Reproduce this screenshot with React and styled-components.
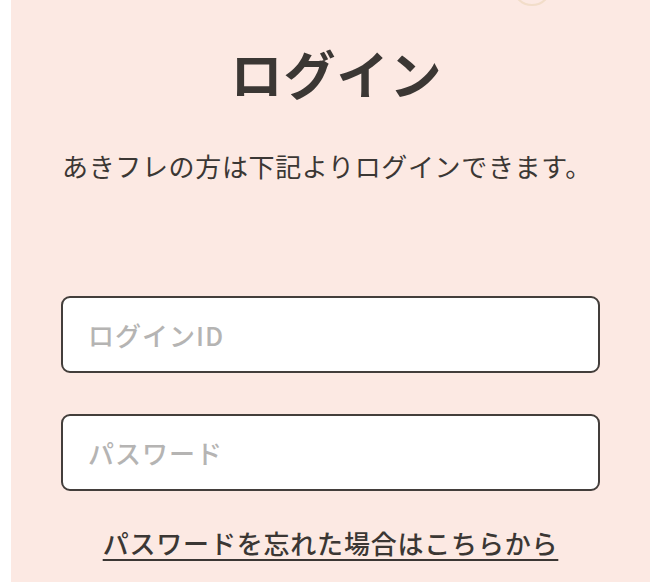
import React from "react";
import styled, { createGlobalStyle } from "styled-components";

const Global = createGlobalStyle`
  html, body { margin: 0; padding: 0; background: #ffffff; }
  body { font-family: "Noto Sans CJK JP", "Noto Sans", sans-serif; }
  * { box-sizing: border-box; }
`;

const Page = styled.div`
  position: relative;
  width: 660px;
  height: 582px;
  overflow: hidden;
  background: #ffffff;
`;

const Panel = styled.main`
  margin-left: 11px;
  width: 639px;
  min-height: 582px;
  background: #fce9e3;
  padding: 47px 50px 0 50px;
  display: flex;
  flex-direction: column;
  color: #3b3734;
`;

const Deco = styled.div`
  position: absolute;
  left: 512px;
  top: -34px;
  width: 40px;
  height: 40px;
  border-radius: 50%;
  border: 2px solid #efd9c2;
  opacity: 0.8;
`;

const Title = styled.h1`
  margin: 0;
  padding-left: 12px;
  font-size: 52px;
  line-height: 52px;
  font-weight: 700;
  text-align: center;
  letter-spacing: 1px;
`;

const Lead = styled.p`
  margin: 49px 0 0 1px;
  font-size: 26px;
  line-height: 36px;
  font-weight: 400;
  letter-spacing: 0.65px;
`;

const Form = styled.form`
  margin-top: 112px;
  display: flex;
  flex-direction: column;
  gap: 41px;
`;

const Field = styled.input`
  width: 100%;
  height: 77px;
  border: 2px solid #433e3b;
  border-radius: 9px;
  background: #ffffff;
  padding: 0 25px;
  font-family: "Noto Sans CJK JP", "Noto Sans", sans-serif;
  font-size: 26px;
  font-weight: 500;
  letter-spacing: 1px;
  color: #3b3734;
  outline: none;
  &::placeholder { color: #b5b4b3; }
`;

const Forgot = styled.a`
  margin-top: 34px;
  align-self: center;
  font-size: 26px;
  line-height: 36px;
  font-weight: 500;
  letter-spacing: 0.8px;
  color: #3b3734;
  text-decoration: underline;
  text-underline-offset: 5px;
  text-decoration-thickness: 2px;
`;

export default function App() {
  return (
    <Page>
      <Global />
      <Panel>
        <Title>ログイン</Title>
        <Lead>あきフレの方は下記よりログインできます。</Lead>
        <Form onSubmit={(e) => e.preventDefault()}>
          <Field type="text" placeholder="ログインID" />
          <Field type="password" placeholder="パスワード" />
        </Form>
        <Forgot href="#">パスワードを忘れた場合はこちらから</Forgot>
      </Panel>
      <Deco />
    </Page>
  );
}
